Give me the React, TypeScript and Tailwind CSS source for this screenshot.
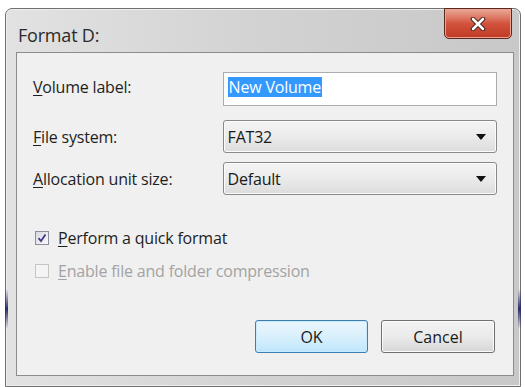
import React from 'react';

const font = { fontFamily: '"Open Sans", "Noto Sans", "Liberation Sans", sans-serif' };

const Arrow = () => (
    <svg width="10" height="6" viewBox="0 0 10 6" className="shrink-0">
        <path d="M0 0 L10 0 L5 6 Z" fill="#111" />
    </svg>
);

const Select: React.FC<{ value: string }> = ({ value }) => (
    <div className="h-[33px] w-[275px] rounded-[3px] border border-[#8a8a8a] bg-gradient-to-b from-[#f4f4f4] via-[#ebebeb] to-[#dcdcdc] shadow-[inset_0_0_0_1px_#fbfbfb] flex items-center justify-between pl-[4px] pr-[10px]">
        <span className="text-[16px] tracking-[-0.2px] text-[#1a1a1a]">{value}</span>
        <Arrow />
    </div>
);

const Check: React.FC<{ checked?: boolean; disabled?: boolean }> = ({ checked, disabled }) => (
    <div className={`w-[14px] h-[14px] border ${disabled ? 'border-[#c6c6c6] bg-[#f4f4f4]' : 'border-[#8a8f9a] bg-gradient-to-br from-[#d8d8e0] to-[#fafafa]'} flex items-center justify-center`}>
        {checked && (
            <svg width="10" height="10" viewBox="0 0 10 10">
                <path d="M1.5 5.2 L4 8 L8.5 1.5" stroke="#3b3b8a" strokeWidth="1.8" fill="none" />
            </svg>
        )}
    </div>
);

const Label: React.FC<{ first: string; rest: string; disabled?: boolean }> = ({ first, rest, disabled }) => (
    <span className={`text-[16px] tracking-[-0.2px] ${disabled ? 'text-[#a3a3a3]' : 'text-[#1e1e1e]'}`}>
        <span className="underline underline-offset-2">{first}</span>
        {rest}
    </span>
);

export default function App() {
    return (
        <div className="w-[525px] h-[387px] bg-white overflow-hidden pt-[8px] pl-[5px]" style={font}>
            <div className="w-[516px] h-[379px] rounded-t-[7px] border border-[#6f6f6f] bg-gradient-to-r from-[#e2e2e2] via-[#d2d2d2] to-[#c8c8c8] shadow-[inset_0_0_0_1px_#f0f0f0] flex flex-col relative">
                {/* aero glass bleed */}
                <div className="absolute left-[-1px] top-[280px] w-[3px] h-[40px] bg-gradient-to-b from-transparent via-[#2a2a6a] to-transparent" />
                <div className="absolute right-[-1px] top-[280px] w-[3px] h-[40px] bg-gradient-to-b from-transparent via-[#2a2a6a] to-transparent" />

                {/* Title bar */}
                <div className="h-[43px] flex justify-between items-start shrink-0">
                    <span className="pt-[13px] pl-[12px] text-[18px] tracking-[-0.2px] text-[#2a2a2a]">Format D:</span>
                    <div className="mr-[8px] mt-[-1px] w-[68px] h-[31px] rounded-b-[5px] border border-[#5a2a22] bg-gradient-to-b from-[#e9a999] via-[#d2533d] to-[#c03a24] shadow-[inset_0_0_0_1px_#f0a090] flex items-center justify-center">
                        <svg width="16" height="14" viewBox="0 0 16 14">
                            <path d="M3 2 L13 12 M13 2 L3 12" stroke="#3a1a14" strokeWidth="4.5" strokeLinecap="round" />
                            <path d="M3 2 L13 12 M13 2 L3 12" stroke="#ffffff" strokeWidth="2.6" strokeLinecap="round" />
                        </svg>
                    </div>
                </div>

                {/* Client area */}
                <div className="flex-1 ml-[10px] mr-[6px] mb-[10px] border border-[#8c8c8c] bg-[#f0f0f0] flex flex-col pl-[16px] pr-[16px]">
                    <div className="mt-[19px] flex items-center">
                        <div className="w-[190px] mt-[-4px]"><Label first="V" rest="olume label:" /></div>
                        <div className="h-[34px] w-[275px] border border-[#abadb3] bg-white flex items-center pl-[4px]">
                            <span className="text-[16px] text-white bg-[#3399ff] leading-[20px] px-[1px] tracking-[-0.2px] mt-[-4px]">New Volume</span>
                        </div>
                    </div>
                    <div className="mt-[14px] flex items-center">
                        <div className="w-[190px]"><Label first="F" rest="ile system:" /></div>
                        <Select value="FAT32" />
                    </div>
                    <div className="mt-[9px] flex items-center">
                        <div className="w-[190px]"><Label first="A" rest="llocation unit size:" /></div>
                        <Select value="Default" />
                    </div>
                    <div className="mt-[31px] flex items-center gap-[9px] pl-[2px]">
                        <Check checked />
                        <Label first="P" rest="erform a quick format" />
                    </div>
                    <div className="mt-[9px] flex items-center gap-[9px] pl-[2px]">
                        <Check disabled />
                        <Label first="E" rest="nable file and folder compression" disabled />
                    </div>
                    <div className="mt-auto mb-[22px] flex justify-end gap-[13px] pr-[2px]">
                        <button className="w-[113px] h-[33px] rounded-[3px] border border-[#3c7fb1] bg-gradient-to-b from-[#eaf6fd] via-[#d9f0fc] to-[#bee6fd] shadow-[inset_0_0_0_1px_#c8eafc] text-[16px] text-[#1a1a1a]">
                            OK
                        </button>
                        <button className="w-[114px] h-[33px] rounded-[3px] border border-[#707070] bg-gradient-to-b from-[#f2f2f2] via-[#ebebeb] to-[#d6d6d6] shadow-[inset_0_0_0_1px_#fbfbfb] text-[16px] text-[#1a1a1a]">
                            Cancel
                        </button>
                    </div>
                </div>
            </div>
        </div>
    );
}
